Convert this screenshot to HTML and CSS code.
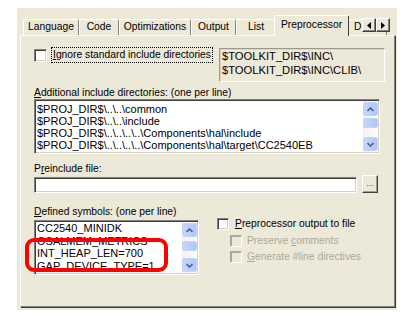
FILE: index.html
```html
<!DOCTYPE html>
<html lang="en">
<head>
    <meta charset="UTF-8">
    <title>Options - C/C++ Compiler - Preprocessor</title>
    <link rel="stylesheet" href="styles.css">
</head>
<body>

    <div class="dialog">
        <div class="tabs">
            <div class="tab w-lang">Language</div>
            <div class="tab w-code">Code</div>
            <div class="tab w-opt">Optimizations</div>
            <div class="tab w-out">Output</div>
            <div class="tab w-list">List</div>
            <div class="tab active w-pre">Preprocessor</div>
            <div class="tab w-diag">D</div>
        </div>

        <!-- tab scroller sits over the last tab -->
        <div class="tab-scroll">
            <span class="arrow-btn"><svg width="4" height="7" viewBox="0 0 4 7"><path d="M4 0 L0 3.5 L4 7 Z" fill="#000"/></svg></span>
            <span class="arrow-btn"><svg width="4" height="7" viewBox="0 0 4 7"><path d="M0 0 L4 3.5 L0 7 Z" fill="#000"/></svg></span>
        </div>

        <div class="page">
            <div class="row-top">
                <label class="check">
                    <span class="box big"></span>
                    <span class="focus"><u>I</u>gnore standard include directories</span>
                </label>
                <div class="readonly">
                    <div>$TOOLKIT_DIR$\INC\</div>
                    <div>$TOOLKIT_DIR$\INC\CLIB\</div>
                </div>
            </div>

            <div class="caption gap-a"><u>A</u>dditional include directories: (one per line)</div>
            <div class="listbox dirs">
                <div class="lines">
                    <div>$PROJ_DIR$\..\..\common</div>
                    <div>$PROJ_DIR$\..\..\include</div>
                    <div>$PROJ_DIR$\..\..\..\..\Components\hal\include</div>
                    <div>$PROJ_DIR$\..\..\..\..\Components\hal\target\CC2540EB</div>
                </div>
                <div class="scroll">
                    <span class="sbtn"><svg width="7" height="5" viewBox="0 0 7 5"><path d="M0.5 4 L3.5 1 L6.5 4" fill="none" stroke="#4d6185" stroke-width="1.6"/></svg></span>
                    <span class="thumb"></span>
                    <span class="track"></span>
                    <span class="sbtn"><svg width="7" height="5" viewBox="0 0 7 5"><path d="M0.5 1 L3.5 4 L6.5 1" fill="none" stroke="#4d6185" stroke-width="1.6"/></svg></span>
                </div>
            </div>

            <div class="caption gap-b">P<u>r</u>einclude file:</div>
            <div class="file-row">
                <div class="input"></div>
                <button class="dots">...</button>
            </div>

            <div class="bottom">
                <div class="symbols">
                    <div class="caption"><u>D</u>efined symbols: (one per line)</div>
                    <div class="listbox defs">
                        <div class="lines">
                            <div>CC2540_MINIDK</div>
                            <div>OSALMEM_METRICS</div>
                            <div>INT_HEAP_LEN=700</div>
                            <div>GAP_DEVICE_TYPE=1</div>
                        </div>
                        <div class="scroll">
                            <span class="sbtn"><svg width="7" height="5" viewBox="0 0 7 5"><path d="M0.5 4 L3.5 1 L6.5 4" fill="none" stroke="#4d6185" stroke-width="1.6"/></svg></span>
                            <span class="thumb low"></span>
                            <span class="track"></span>
                            <span class="sbtn"><svg width="7" height="5" viewBox="0 0 7 5"><path d="M0.5 1 L3.5 4 L6.5 1" fill="none" stroke="#4d6185" stroke-width="1.6"/></svg></span>
                        </div>
                    </div>
                </div>

                <div class="options">
                    <label class="opt">
                        <span class="box"></span>
                        <span class="opt-text"><u>P</u>reprocessor output to file</span>
                    </label>
                    <label class="opt sub disabled">
                        <span class="box"></span>
                        <span class="opt-text">Preserve <u>c</u>omments</span>
                    </label>
                    <label class="opt sub disabled">
                        <span class="box"></span>
                        <span class="opt-text"><u>G</u>enerate #line directives</span>
                    </label>
                </div>
            </div>
        </div>

        <!-- red annotation drawn over the screenshot -->
        <div class="mark"></div>
    </div>

</body>
</html>
```

FILE: styles.css
```css
body {
    margin: 0;
    background: #fff;
    font-family: "Liberation Sans", Arial, sans-serif;
    font-size: 10.3px;
    color: #000;
}
u {
    text-decoration: underline;
    text-underline-offset: 1px;
}
.dialog {
    position: relative;
    width: 380px;
    height: 302px;
    margin: 8px 0 0 17px;
    background: #ece9d8;
}

/* tabs */
.tabs {
    display: flex;
    align-items: flex-end;
    height: 27px;
    padding-left: 6px;
}
.tab {
    box-sizing: border-box;
    height: 16px;
    line-height: 14px;
    text-align: center;
    border-top: 1px solid #fff;
    border-left: 1px solid #fff;
    border-right: 1px solid #808080;
    border-radius: 2px 2px 0 0;
    white-space: nowrap;
}
.tab.active {
    position: relative;
    z-index: 1;
    height: 21px;
    margin: 0 -2px -1px;
    line-height: 18px;
    background: #ece9d8;
    border-right: 1px solid #404040;
}
.w-lang { width: 56px; }
.w-code { width: 40px; }
.w-opt { width: 72px; }
.w-out { width: 45px; }
.w-list { width: 40px; }
.w-pre { width: 75px; }
.w-diag { width: 40px; text-align: left; padding-left: 6px; }

.tab-scroll {
    position: absolute;
    left: 345px;
    top: 10px;
    z-index: 2;
    display: flex;
}
.arrow-btn {
    box-sizing: border-box;
    display: flex;
    align-items: center;
    justify-content: center;
    width: 14px;
    height: 14px;
    background: #ece9d8;
    border: 1px solid;
    border-color: #fff #404040 #404040 #fff;
    box-shadow: inset -1px -1px 0 #808080;
}

/* page */
.page {
    box-sizing: border-box;
    width: 375px;
    height: 272px;
    margin-left: 3px;
    padding: 11px 13px 0;
    border: 1px solid;
    border-color: #fff #808080 #808080 #fff;
    box-shadow: 1px 1px 0 #404040;
}
.row-top {
    display: flex;
    align-items: flex-start;
    height: 35px;
    margin-right: -4px;
}
.check {
    display: flex;
    align-items: center;
}
.box {
    box-sizing: border-box;
    width: 12px;
    height: 12px;
    flex: none;
    background: #fff;
    border: 1px solid;
    border-color: #808080 #fff #fff #808080;
    box-shadow: inset 1px 1px 0 #404040, inset -1px -1px 0 #d4d0c8;
}
.box.big {
    width: 13px;
    height: 13px;
}
.focus {
    margin-left: 4px;
    padding: 0 1px;
    line-height: 14px;
    border: 1px dotted #000;
}
.readonly {
    box-sizing: border-box;
    width: 166px;
    height: 34px;
    margin: 1px 0 0 auto;
    padding: 0 2px;
    font-size: 11.2px;
    line-height: 14px;
    border: 1px solid;
    border-color: #9d9a8c #fff #fff #9d9a8c;
    box-shadow: inset 1px 1px 0 #d8d5c6;
}

.caption {
    line-height: 13px;
}
.gap-a { margin-top: 4px; }
.gap-b { margin-top: 8px; }

/* list boxes */
.listbox {
    box-sizing: border-box;
    display: flex;
    background: #fff;
    border: 1px solid;
    border-color: #808080 #fff #fff #808080;
    box-shadow: inset 1px 1px 0 #404040, inset -1px -1px 0 #d4d0c8;
    padding: 1px;
    font-size: 11px;
}
.listbox.dirs {
    width: 346px;
    height: 55px;
}
.listbox.defs {
    width: 165px;
    height: 55px;
    margin-top: 2px;
}
.lines {
    flex: 1;
    overflow: hidden;
    white-space: nowrap;
    padding-left: 1px;
}
.dirs .lines {
    padding-top: 2px;
    line-height: 12px;
}
.defs .lines {
    line-height: 12.5px;
}
.scroll {
    width: 15px;
    display: flex;
    flex-direction: column;
    background: linear-gradient(to right, #f3f1ec, #fdfdfa);
}
.sbtn {
    box-sizing: border-box;
    display: flex;
    align-items: center;
    justify-content: center;
    height: 14px;
    margin: 1px 0;
    background: linear-gradient(to right, #c6d6fd, #b2c7f8);
    border: 1px solid #c3d4fc;
    border-radius: 2px;
}
.thumb {
    height: 8px;
    margin-top: 1px;
    background: linear-gradient(to right, #c6d6fd, #b2c7f8);
    border: 1px solid #c3d4fc;
    border-radius: 2px;
}
.thumb.low {
    margin-top: 3px;
}
.track {
    flex: 1;
}

/* preinclude */
.file-row {
    display: flex;
    align-items: flex-end;
    height: 18px;
}
.input {
    box-sizing: border-box;
    width: 323px;
    height: 16px;
    background: #fff;
    border: 1px solid;
    border-color: #808080 #fff #fff #808080;
    box-shadow: inset 1px 1px 0 #404040, inset -1px -1px 0 #d4d0c8;
}
.dots {
    box-sizing: border-box;
    width: 16px;
    height: 18px;
    margin-left: 5px;
    padding: 0 0 3px;
    font: 9px "Liberation Sans", Arial, sans-serif;
    color: #555;
    background: #ece9d8;
    border: 1px solid;
    border-color: #fff #404040 #404040 #fff;
    box-shadow: inset -1px -1px 0 #a09d90;
}

/* bottom block */
.bottom {
    display: flex;
    margin-top: 12px;
}
.symbols {
    width: 165px;
}
.options {
    margin-left: 18px;
    padding-top: 13px;
}
.opt {
    display: flex;
    align-items: center;
    height: 12px;
    margin-bottom: 5px;
}
.opt.sub {
    margin-left: 13px;
    margin-bottom: 4px;
}
.opt-text {
    margin-left: 6px;
    line-height: 12px;
}
.sub .opt-text {
    margin-left: 5px;
}
.disabled .box {
    background: #ece9d8;
    box-shadow: inset 1px 1px 0 #aca899;
    border-color: #aca899 #fff #fff #aca899;
}
.disabled .opt-text {
    color: #aca899;
}

/* annotation */
.mark {
    position: absolute;
    left: 8px;
    top: 230px;
    box-sizing: border-box;
    width: 143px;
    height: 34px;
    border: 4px solid #f00;
    border-radius: 9px;
}
```
